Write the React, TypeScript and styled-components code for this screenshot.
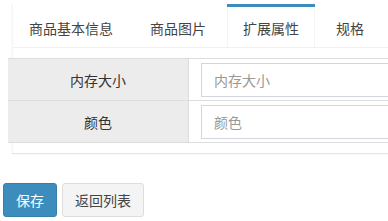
import React from "react";
import styled, { createGlobalStyle } from "styled-components";

const Global = createGlobalStyle`
  html, body { margin: 0; padding: 0; background: #fff; overflow: hidden; }
  body {
    font-family: "Liberation Sans", "Noto Sans CJK SC", sans-serif;
    font-size: 14px;
    color: #333;
  }
  * { box-sizing: border-box; }
`;

const Page = styled.div`
  width: 388px;
  height: 221px;
  padding-top: 4px;
  overflow: hidden;
`;

const TabBox = styled.div`
  margin-left: 12px;
  width: 420px;
  background: #fff;
  border-left: 1px solid #f4f4f4;
  box-shadow: 0 1px 1px rgba(0, 0, 0, 0.1);
`;

const NavTabs = styled.ul`
  display: flex;
  margin: 0;
  padding: 0;
  list-style: none;
  border-bottom: 1px solid #f0f0f0;
  height: 44px;
`;

const TabItem = styled.li<{ $active?: boolean }>`
  margin-right: 5px;
  border-top: 3px solid ${(p) => (p.$active ? "#3c8dbc" : "transparent")};
  height: 43px;
`;

const TabLink = styled.a<{ $active?: boolean }>`
  display: block;
  height: 40px;
  padding: 10px 15px;
  line-height: 20px;
  font-size: 14px;
  color: #444;
  text-decoration: none;
  border-left: 1px solid ${(p) => (p.$active ? "#f4f4f4" : "transparent")};
  border-right: 1px solid ${(p) => (p.$active ? "#f4f4f4" : "transparent")};
  background: ${(p) => (p.$active ? "#fff" : "transparent")};
  font-family: "Noto Sans CJK SC", sans-serif;
  padding-top: 11px;
`;

const TabContent = styled.div`
  padding: 10px 0 10px 0;
`;

const Table = styled.div`
  margin-left: -5px;
  border-top: 1px solid #ddd;
`;

const Row = styled.div`
  display: grid;
  grid-template-columns: 181px 1fr;
  height: 42px;
  border-bottom: 1px solid #ddd;
`;

const Label = styled.div`
  background: #ececec;
  border-right: 1px solid #ddd;
  display: flex;
  align-items: center;
  justify-content: center;
  color: #333;
  font-family: "Noto Sans CJK SC", sans-serif;
  font-size: 14px;
`;

const Cell = styled.div`
  display: flex;
  align-items: center;
  padding-left: 12px;
`;

const Input = styled.input`
  width: 240px;
  height: 34px;
  border: 1px solid #d2d6de;
  padding: 6px 12px;
  font-size: 14px;
  font-family: "Noto Sans CJK SC", sans-serif;
  color: #555;
  outline: none;
  &::placeholder { color: #999; }
`;

const Footer = styled.div`
  display: flex;
  gap: 5px;
  margin-top: 30px;
  margin-left: 3px;
`;

const Button = styled.button<{ $primary?: boolean }>`
  height: 34px;
  padding: 6px 12px;
  font-size: 14px;
  line-height: 20px;
  font-family: "Noto Sans CJK SC", sans-serif;
  border-radius: 3px;
  border: 1px solid ${(p) => (p.$primary ? "#367fa9" : "#ddd")};
  background: ${(p) => (p.$primary ? "#3c8dbc" : "#f4f4f4")};
  color: ${(p) => (p.$primary ? "#fff" : "#444")};
`;

const tabs = ["商品基本信息", "商品图片", "扩展属性", "规格"];
const rows = ["内存大小", "颜色"];

export default function App() {
  return (
    <Page>
      <Global />
      <TabBox>
        <NavTabs>
          {tabs.map((t, i) => (
            <TabItem key={t} $active={i === 2}>
              <TabLink $active={i === 2}>{t}</TabLink>
            </TabItem>
          ))}
        </NavTabs>
        <TabContent>
          <Table>
            {rows.map((r) => (
              <Row key={r}>
                <Label>{r}</Label>
                <Cell>
                  <Input placeholder={r} />
                </Cell>
              </Row>
            ))}
          </Table>
        </TabContent>
      </TabBox>
      <Footer>
        <Button $primary>保存</Button>
        <Button>返回列表</Button>
      </Footer>
    </Page>
  );
}
